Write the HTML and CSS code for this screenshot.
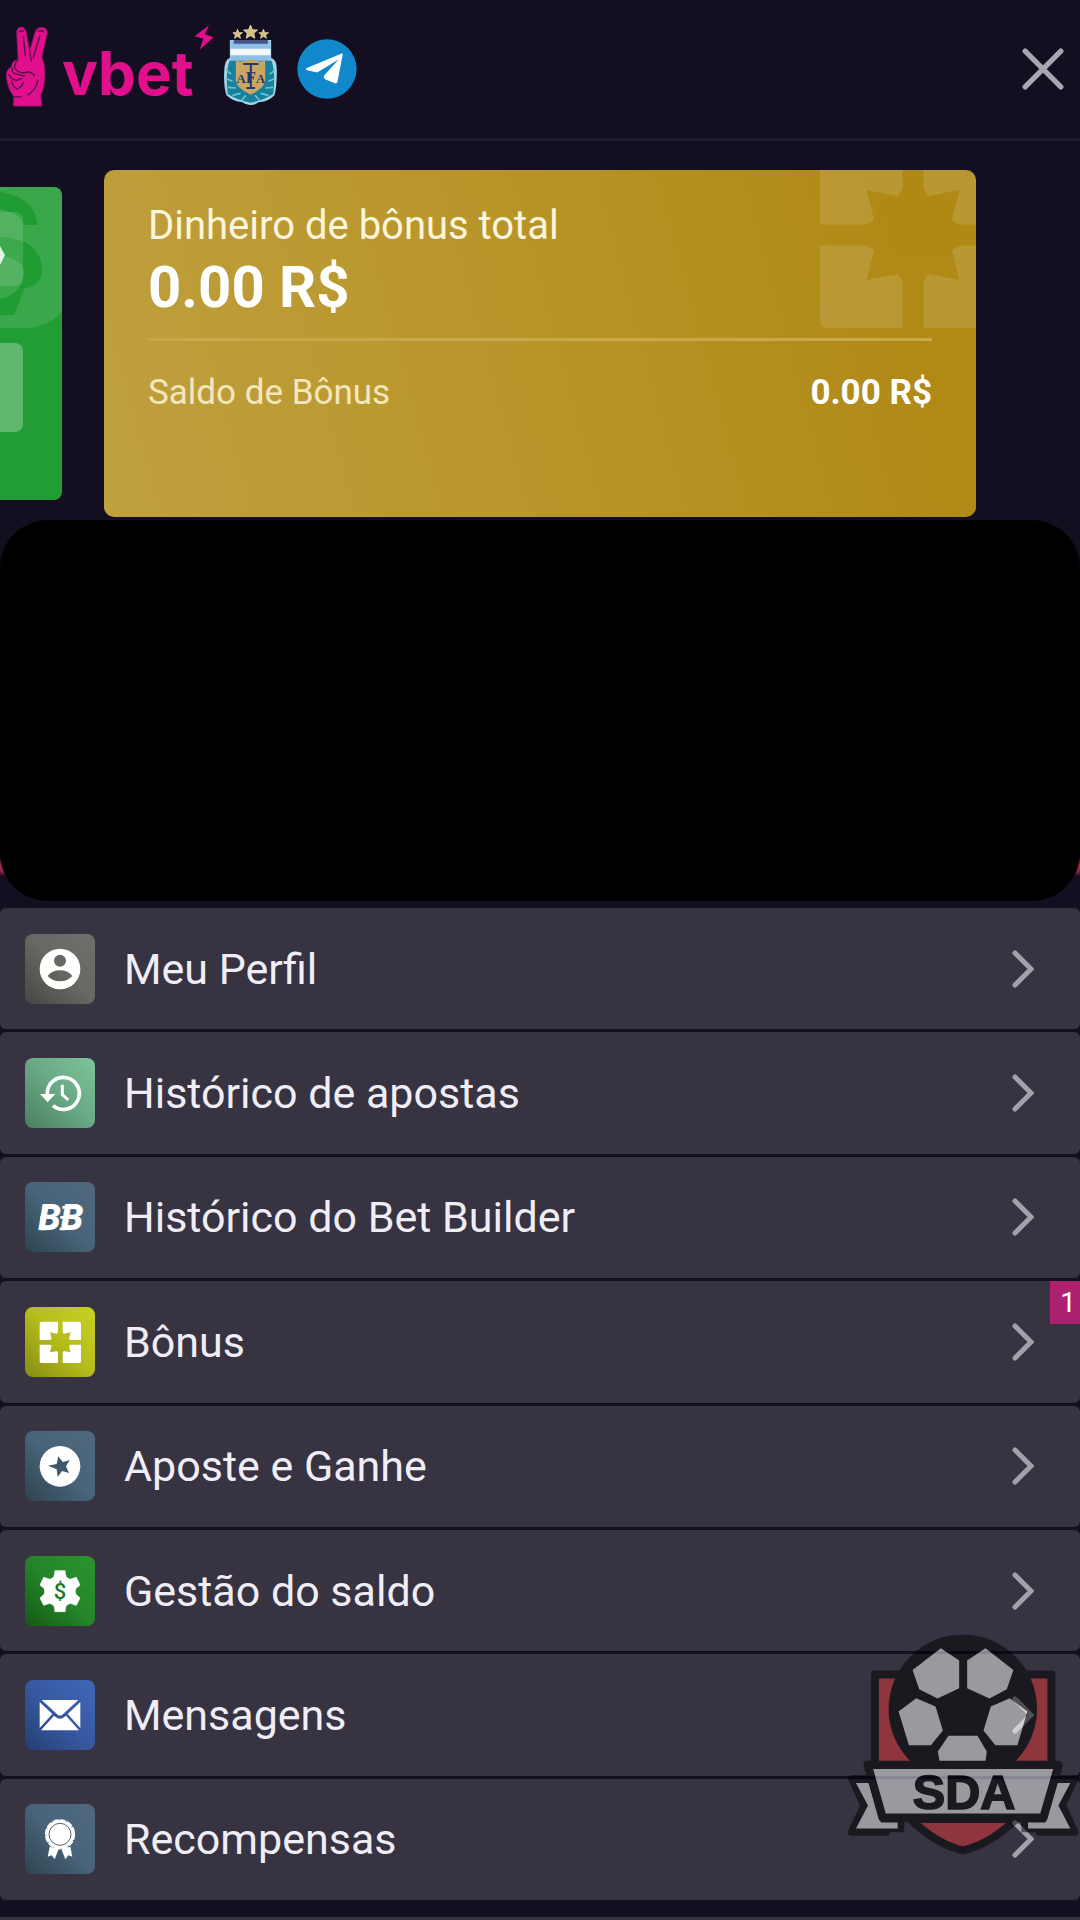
FILE: index.html
```html
<!DOCTYPE html>
<html lang="pt-BR">
  <head>
    <meta charset="UTF-8" />
    <meta name="viewport" content="width=device-width, initial-scale=1.0" />
    <title>vbet</title>
    <link rel="stylesheet" href="styles.css">
  </head>

  <body>
    <!-- Topo com logos e botão de fechar -->
    <header class="topo">
      <a class="marca" href="#" aria-label="vbet">
        <svg class="mao" viewBox="12 72 134 248">
          <path d="M52 176L48 100Q46 78 61 78Q74 78 77 96L87 150L104 92Q110 77 127 79Q143 82 140 98L124 170Q136 196 133 230Q132 262 121 286L124 318H38L39 290Q22 268 17 236Q12 208 32 198Q32 180 52 176Z" fill="#e20f8c" stroke="#8c1766" stroke-width="3" />
          <path d="M56 92Q60 86 68 91M113 91Q122 86 130 92M68 105L74 165M118 104L98 172M87 150L92 180M52 178Q38 188 42 204Q58 222 84 214Q96 216 102 226M34 202Q30 214 43 219L72 227M24 222Q28 236 48 240L64 234M32 240Q34 262 52 266M56 262Q66 258 68 246M40 290H62M112 240Q106 270 82 284" fill="none" stroke="#501047" stroke-width="4" stroke-linecap="round" />
        </svg>
        <span class="marca-nome">vbet</span>
        <svg class="raio" viewBox="582 82 60 76">
          <path d="M627 83L584 116L610 124L599 157L641 119L615 110Z" fill="#e20f8c" />
        </svg>
      </a>
      <a href="#" aria-label="AFA">
        <svg class="afa" viewBox="668 72 164 246">
          <path d="M688 120H812V174Q830 178 829 214Q829 262 822 286Q800 308 776 306Q762 316 750 315Q738 316 724 306Q698 306 678 286Q669 260 671 214Q672 178 688 174Z" fill="#9fd4e6" />
          <path d="M690 122H810V188H690Z" fill="#8fbfe6" />
          <path d="M700 120H802V131H700Z" fill="#45568c" />
          <path d="M690 146H810V166H690Z" fill="#f3f6fa" />
          <path d="M687 182Q674 220 682 282Q714 302 750 308Q786 302 818 282Q826 220 813 182Z" fill="#17809c" />
          <path d="M678 212L692 222M678 236L696 244M682 262L706 264M696 286L720 280M724 300L736 286M822 212L808 222M822 236L804 244M818 262L794 264M804 286L780 280M776 300L764 286" stroke="#6fc2cf" stroke-width="5" />
          <path d="M706 182Q728 188 750 178Q772 188 794 182V244Q790 266 750 284Q710 266 706 244Z" fill="#c9a662" />
          <text class="afa-letra" x="751" y="250">A<tspan class="afa-letra-f">F</tspan>A</text>
          <path d="M728 192H774M751 192V264M738 264H764" stroke="#1f3a6e" stroke-width="6" />
          <g fill="#d8c07c" stroke="#fff2c8" stroke-width="2">
            <path d="M750 75L756 89L771 90L760 100L763 115L750 107L737 115L740 100L729 90L744 89Z" />
            <path d="M711 88L715 98L726 98L717 105L720 115L711 109L702 115L705 105L697 98L707 98Z" />
            <path d="M789 88L793 98L804 98L795 105L798 115L789 109L780 115L783 105L775 98L785 98Z" />
          </g>
        </svg>
      </a>
      <a href="#" aria-label="Telegram">
        <svg class="telegram" viewBox="0 0 176 176">
          <circle cx="88" cy="88" r="87" fill="#1187cc" />
          <path d="M133 42L27 86Q24 90 30 92L59 98L122 60L79 108Q77 114 82 118L111 130Q117 132 119 124L134 46Q134 42 133 42Z" fill="#fff" />
        </svg>
      </a>
      <button class="fechar" type="button" aria-label="Fechar">
        <svg viewBox="0 0 40 40">
          <path d="M3 3L37 37M37 3L3 37" />
        </svg>
      </button>
    </header>

    <!-- Carrossel de saldos -->
    <section class="carrossel">
      <div class="cartao-verde">
        <svg class="cifrao" viewBox="0 0 62 313">
          <path d="M0 0H62V125Q46 141 26 141H0Z" fill="#fff" fill-opacity="0.11" />
          <path d="M12 8Q34 14 38 38H24Q20 26 0 22V4Z" fill="#1f9d32" />
          <path d="M0 50Q42 52 42 84Q42 98 24 102L14 128H0V112Q24 106 24 84Q22 72 0 68Z" fill="#1f9d32" />
        </svg>
        <button class="seta" type="button" aria-label="Depositar">
          <svg viewBox="0 0 5 20">
            <path d="M0 0L5 9L0 19Z" fill="#dff5e3" />
          </svg>
        </button>
        <button class="acao" type="button" aria-label="Sacar"></button>
      </div>

      <div class="cartao-bonus">
        <svg class="presente" viewBox="44 44 124 124">
          <g fill="#fff">
            <path id="quarto" d="M50 44H99V75L96 80L75 76L80 96L75 99H44V50Q44 44 50 44Z" />
            <use href="#quarto" transform="translate(212 0) scale(-1 1)" />
            <use href="#quarto" transform="translate(0 212) scale(1 -1)" />
            <use href="#quarto" transform="translate(212 212) scale(-1 -1)" />
          </g>
        </svg>
        <div class="bonus-total">
          <p class="bonus-titulo">Dinheiro de bônus total</p>
          <p class="bonus-valor">0.00 R$</p>
        </div>
        <div class="bonus-saldo">
          <span>Saldo de Bônus</span>
          <strong>0.00 R$</strong>
        </div>
      </div>
    </section>

    <!-- Área oculta -->
    <div class="faixa">
      <div class="tarja"></div>
    </div>

    <!-- Menu da conta -->
    <nav class="menu">
      <a class="item" href="#">
        <span class="icone icone-cinza">
          <svg viewBox="0 0 210 210">
            <path fill-rule="evenodd" d="M105 44a61 61 0 1 0 0 122a61 61 0 1 0 0-122ZM105 62a18 18 0 1 1 0 36a18 18 0 1 1 0-36ZM68 126Q80 109 105 109Q130 109 142 126Q128 142 105 142Q82 142 68 126Z" fill="#fff" />
          </svg>
        </span>
        <span class="rotulo">Meu Perfil</span>
        <svg class="chevron" viewBox="0 0 22 38"><path d="M3 3L19 19L3 35" /></svg>
      </a>
      <a class="item" href="#">
        <span class="icone icone-menta">
          <svg viewBox="0 0 210 210">
            <path d="M67 108A48 48 0 1 1 84 143" fill="none" stroke="#fff" stroke-width="11" />
            <path d="M45 108H91L68 133Z" fill="#fff" />
            <path d="M112 80V110L130 126" fill="none" stroke="#fff" stroke-width="9" />
          </svg>
        </span>
        <span class="rotulo">Histórico de apostas</span>
        <svg class="chevron" viewBox="0 0 22 38"><path d="M3 3L19 19L3 35" /></svg>
      </a>
      <a class="item" href="#">
        <span class="icone icone-azul">
          <svg viewBox="0 0 210 210">
            <text class="bb" x="107" y="145">BB</text>
            <path d="M52 76H72M46 106H66M44 141H64M112 76H128M106 106H124M104 141H122" stroke="#fff" stroke-width="8" />
          </svg>
        </span>
        <span class="rotulo">Histórico do Bet Builder</span>
        <svg class="chevron" viewBox="0 0 22 38"><path d="M3 3L19 19L3 35" /></svg>
      </a>
      <a class="item" href="#">
        <span class="icone icone-lima">
          <svg viewBox="0 0 210 210">
            <g fill="#fff">
              <use href="#quarto" />
              <use href="#quarto" transform="translate(212 0) scale(-1 1)" />
              <use href="#quarto" transform="translate(0 212) scale(1 -1)" />
              <use href="#quarto" transform="translate(212 212) scale(-1 -1)" />
            </g>
          </svg>
        </span>
        <span class="rotulo">Bônus</span>
        <svg class="chevron" viewBox="0 0 22 38"><path d="M3 3L19 19L3 35" /></svg>
        <span class="aviso">1</span>
      </a>
      <a class="item" href="#">
        <span class="icone icone-azul">
          <svg viewBox="0 0 210 210">
            <circle cx="105" cy="106" r="61" fill="#fff" />
            <path d="M100 76L113 93L134 88L123 106L132 126L111 120L98 138L95 115L69 104L95 99Z" fill="#3e596d" />
          </svg>
        </span>
        <span class="rotulo">Aposte e Ganhe</span>
        <svg class="chevron" viewBox="0 0 22 38"><path d="M3 3L19 19L3 35" /></svg>
      </a>
      <a class="item" href="#">
        <span class="icone icone-verde">
          <svg viewBox="0 0 210 210">
            <path d="M90 44H120L123 63L135 70L154 64L165 87L152 98Q150 106 152 114L165 126L154 148L135 142L123 149L120 167H90L87 149L75 142L56 148L45 126L58 114Q60 106 58 98L45 87L56 64L75 70L87 63Z" fill="#fff" stroke="#fff" stroke-width="2" stroke-linejoin="round" />
            <text class="moeda" x="105" y="129">$</text>
          </svg>
        </span>
        <span class="rotulo">Gestão do saldo</span>
        <svg class="chevron" viewBox="0 0 22 38"><path d="M3 3L19 19L3 35" /></svg>
      </a>
      <a class="item" href="#">
        <span class="icone icone-royal">
          <svg viewBox="0 0 210 210">
            <path d="M50 60H160L112 104Q105 109 98 104ZM44 66L82 102L44 144ZM166 66L128 102L166 144ZM87 107L95 113Q105 119 115 113L123 107L162 151H48Z" fill="#fff" />
          </svg>
        </span>
        <span class="rotulo">Mensagens</span>
        <svg class="chevron" viewBox="0 0 22 38"><path d="M3 3L19 19L3 35" /></svg>
      </a>
      <a class="item" href="#">
        <span class="icone icone-azul">
          <svg viewBox="0 0 210 210">
            <path d="M74 128L68 158L80 154L89 166L101 134ZM136 128L142 158L130 154L121 166L109 134Z" fill="#fff" />
            <circle cx="105" cy="91" r="41" fill="#fff" />
            <circle cx="105" cy="91" r="42" fill="none" stroke="#fff" stroke-width="7" stroke-dasharray="14 8" stroke-linecap="round" />
            <circle cx="105" cy="91" r="33" fill="none" stroke="#4d6577" stroke-width="3" />
          </svg>
        </span>
        <span class="rotulo">Recompensas</span>
        <svg class="chevron" viewBox="0 0 22 38"><path d="M3 3L19 19L3 35" /></svg>
      </a>
    </nav>

    <!-- Começo do próximo grupo -->
    <div class="proximo"></div>

    <!-- Escudo SDA por cima da tela -->
    <svg class="escudo" viewBox="80 70 700 665">
      <path d="M164 470V194H694V470Z" fill="#e5383a" stroke="#000" stroke-width="24" stroke-linejoin="round" />
      <path d="M270 628H588Q510 704 428 722Q350 704 270 628Z" fill="#e5383a" stroke="#000" stroke-width="24" stroke-linejoin="round" />
      <path d="M92 506H200V668H92L130 587ZM766 506H656V668H766L728 587Z" fill="#000" stroke="#000" stroke-width="20" stroke-linejoin="round" />
      <path d="M205 630H252V668H205ZM604 630H650V668H604Z" fill="#000" />
      <path d="M107 520H146L182 638H232V656H107L143 587ZM751 520H712L676 638H624V656H751L715 587Z" fill="#fff" />
      <circle cx="428" cy="297" r="223" fill="#000" />
      <path d="M362 115L417 152V235L352 266L297 238L277 180ZM496 115L441 152V235L508 266L560 238L580 180ZM288 265L346 290L368 362L332 406H266L235 305ZM569 265L512 290L490 362L526 406H592L622 305ZM385 378H472L500 425L496 454H358L353 425Z" fill="#fff" />
      <path d="M142 465H716L670 624H187Z" fill="#fff" stroke="#000" stroke-width="25" stroke-linejoin="round" />
      <text class="escudo-texto" x="432" y="597">SDA</text>
    </svg>
  </body>
</html>
```
FILE: styles.css
```css
/* Estilo geral */
* {
  box-sizing: border-box;
}

body {
  display: flex;
  flex-direction: column;
  height: 100vh;
  margin: 0;
  position: relative;
  overflow: hidden;
  font-family: Roboto, sans-serif;
  background-color: #140f20;
  color: #fff;
}

a {
  color: inherit;
  text-decoration: none;
}

button {
  border: 0;
  padding: 0;
  background: none;
}

svg {
  display: block;
}

/* Topo */
.topo {
  display: flex;
  align-items: center;
  height: 141px;
  padding: 0 16px 0 5px;
  border-bottom: 3px solid #1f1b2c;
}

.marca {
  display: flex;
  align-items: center;
  margin-right: 9px;
}

.mao {
  width: 44px;
  height: 82px;
  margin: 0 13px 6px 0;
}

.marca-nome {
  padding-top: 8px;
  font-family: Inter, sans-serif;
  font-size: 60px;
  font-weight: 700;
  line-height: 60px;
  color: #e20f8c;
}

.raio {
  width: 20px;
  height: 25px;
  align-self: flex-start;
}

.afa {
  width: 55px;
  height: 82px;
  margin: 0 19px 8px 0;
}

.afa-letra {
  font: bold 38px "Liberation Serif", serif;
  text-anchor: middle;
  fill: #1f3a6e;
}

.afa-letra-f {
  font-size: 50px;
}

.telegram {
  width: 60px;
  height: 60px;
}

.fechar {
  margin-left: auto;
}

.fechar svg {
  width: 42px;
  height: 42px;
  fill: none;
  stroke: #a9a6b2;
  stroke-width: 5;
  stroke-linecap: round;
}

/* Carrossel */
.carrossel {
  display: grid;
  grid-template-columns: 62px 1fr 62px;
  gap: 42px;
  align-items: center;
  margin: 29px 0 3px;
}

.cartao-verde {
  position: relative;
  height: 313px;
  padding-top: 25px;
  border-radius: 0 8px 8px 0;
  overflow: hidden;
  background-color: #229d35;
}

.cifrao {
  position: absolute;
  top: 0;
  left: 0;
  width: 62px;
  height: 313px;
}

.seta,
.acao {
  display: block;
  position: relative;
  width: 23px;
  border-radius: 0 8px 8px 0;
}

.seta {
  height: 74px;
  padding-top: 14px;
  margin-bottom: 57px;
  background-color: rgba(255, 255, 255, 0.13);
}

.seta svg {
  width: 5px;
  height: 20px;
}

.acao {
  height: 89px;
  background-color: rgba(255, 255, 255, 0.28);
}

.cartao-bonus {
  position: relative;
  height: 347px;
  padding: 30px 44px;
  border-radius: 10px;
  overflow: hidden;
  background: linear-gradient(75deg, #bfa03f, #b9962b 45%, #b08916 90%);
}

.presente {
  position: absolute;
  top: -28px;
  right: -30px;
  width: 186px;
  height: 186px;
  opacity: 0.12;
}

.bonus-total {
  position: relative;
  padding-bottom: 16px;
  border-bottom: 3px solid #c8a849;
}

.bonus-titulo,
.bonus-valor {
  margin: 0;
}

.bonus-titulo {
  font-size: 40px;
  line-height: 52px;
  color: #fdf5dc;
}

.bonus-valor {
  font-size: 58px;
  font-weight: 700;
  line-height: 70px;
}

.bonus-saldo {
  display: flex;
  justify-content: space-between;
  padding-top: 30px;
  font-size: 35px;
  line-height: 44px;
  color: #f5e6bc;
}

.bonus-saldo strong {
  color: #fff;
}

/* Faixa com tarja preta */
.faixa {
  margin-bottom: 7px;
  background: linear-gradient(#140f20 336px, #b3293f 346px, #7a2348 352px, #140f20 356px);
}

.tarja {
  height: 381px;
  border-radius: 48px;
  background-color: #000;
}

/* Menu */
.menu {
  flex: 1;
  display: grid;
  grid-auto-rows: 1fr;
  gap: 3px;
}

.item {
  display: flex;
  align-items: center;
  position: relative;
  padding: 0 46px 0 25px;
  border-radius: 6px;
  background-color: #373341;
}

.icone {
  width: 70px;
  height: 70px;
  margin-right: 29px;
  border-radius: 8px;
}

.icone-cinza {
  background: linear-gradient(to top right, #464644, #686862 50%, #70706a);
}

.icone-menta {
  background: linear-gradient(to top right, #4b7e61, #69a985 50%, #7cc39b);
}

.icone-azul {
  background: linear-gradient(to top right, #2e444f, #48647a 50%, #50687e);
}

.icone-lima {
  background: linear-gradient(to top right, #868c12, #b4bc1c 50%, #c8d220);
}

.icone-verde {
  background: linear-gradient(to top right, #155a17, #248528 50%, #2c942f);
}

.icone-royal {
  background: linear-gradient(to top right, #243f72, #3759a1 50%, #4067b9);
}

.bb {
  font: italic 900 108px "Liberation Sans Narrow", Roboto, sans-serif;
  text-anchor: middle;
  fill: #fff;
}

.moeda {
  font: 500 66px Roboto, sans-serif;
  text-anchor: middle;
  fill: #1f7a24;
}

.rotulo {
  flex: 1;
  font-size: 43px;
  line-height: 52px;
  color: #efedf5;
}

.chevron {
  width: 22px;
  height: 38px;
  fill: none;
  stroke: #a3a0ab;
  stroke-width: 5;
  stroke-linecap: round;
}

.aviso {
  position: absolute;
  top: 0;
  right: 0;
  width: 30px;
  padding-right: 4px;
  font-size: 28px;
  line-height: 43px;
  text-align: right;
  background-color: #ad226f;
}

.proximo {
  height: 3px;
  margin-top: 17px;
  background-color: #373341;
}

/* Escudo flutuante */
.escudo {
  position: absolute;
  right: 0;
  bottom: 65px;
  width: 233px;
  height: 222px;
  opacity: 0.5;
}

.escudo-texto {
  font: bold 146px "Liberation Sans", sans-serif;
  text-anchor: middle;
  stroke: #000;
  stroke-width: 5;
}
```
